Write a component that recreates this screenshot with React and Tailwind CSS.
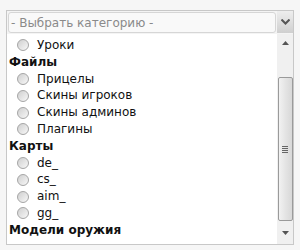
import React from 'react';

const groups = [
  { title: null, items: ['Уроки'] },
  { title: 'Файлы', items: ['Прицелы', 'Скины игроков', 'Скины админов', 'Плагины'] },
  { title: 'Карты', items: ['de_', 'cs_', 'aim_', 'gg_'] },
  { title: 'Модели оружия', items: [] },
];

const Radio = () => (
  <span className="inline-block w-[12px] h-[12px] rounded-full border border-[#a5a5a5] bg-gradient-to-br from-[#cfcfcf] to-[#f8f8f8] mr-[8px]" />
);

const App = () => {
  return (
    <div className="w-[300px] h-[250px] bg-[#f6f6f6] overflow-hidden pt-[10px] pl-[6px] font-['Tahoma','DejaVu_Sans',sans-serif]">
      <div className="w-[288px] border border-[#c8c8c8] bg-white">
        <div className="flex bg-[#f4f4f4]">
          <div className="flex-1 h-[21px] m-[1px] border border-[#d6d6d6] rounded-[3px] bg-[#f9f9f9] flex items-center pl-[2px] text-[12px] text-[#8a8a8a]">
            - Выбрать категорию -
          </div>
          <div className="w-[16px] h-[22px] bg-gradient-to-b from-[#eeeeee] to-[#cfcfcf] flex items-center justify-center">
            <svg width="9" height="6" viewBox="0 0 9 6">
              <path d="M0.5 0.5 L4.5 4.5 L8.5 0.5" fill="none" stroke="#555" strokeWidth="2" />
            </svg>
          </div>
        </div>
        <div className="flex h-[210px]">
          <div className="flex-1 overflow-hidden pt-[3px] text-[12px] leading-[16.8px] text-[#111]">
            {groups.map((g, i) => (
              <div key={i}>
                {g.title && <div className="pl-[2px] font-bold">{g.title}</div>}
                {g.items.map((it) => (
                  <div key={it} className="flex items-center pl-[10px]">
                    <Radio />
                    <span>{it}</span>
                  </div>
                ))}
              </div>
            ))}
          </div>
          <div className="w-[16px] bg-[#f0f0f0] flex flex-col items-center">
            <div className="h-[17px] flex items-center justify-center">
              <svg width="7" height="4" viewBox="0 0 7 4"><path d="M0 4 L3.5 0 L7 4 Z" fill="#555" /></svg>
            </div>
            <div className="h-[26px]" />
            <div className="w-[15px] h-[144px] border border-[#9a9a9a] rounded-[2px] bg-gradient-to-r from-[#f2f2f2] via-[#e4e4e4] to-[#d8d8d8] flex items-center justify-center">
              <div className="flex flex-col gap-[1px]">
                <div className="w-[6px] h-[1px] bg-[#666]" />
                <div className="w-[6px] h-[1px] bg-[#666]" />
                <div className="w-[6px] h-[1px] bg-[#666]" />
                <div className="w-[6px] h-[1px] bg-[#666]" />
              </div>
            </div>
            <div className="flex-1 flex items-center justify-center">
              <svg width="7" height="4" viewBox="0 0 7 4"><path d="M0 0 L3.5 4 L7 0 Z" fill="#555" /></svg>
            </div>
          </div>
        </div>
      </div>
    </div>
  );
};

export default App;
